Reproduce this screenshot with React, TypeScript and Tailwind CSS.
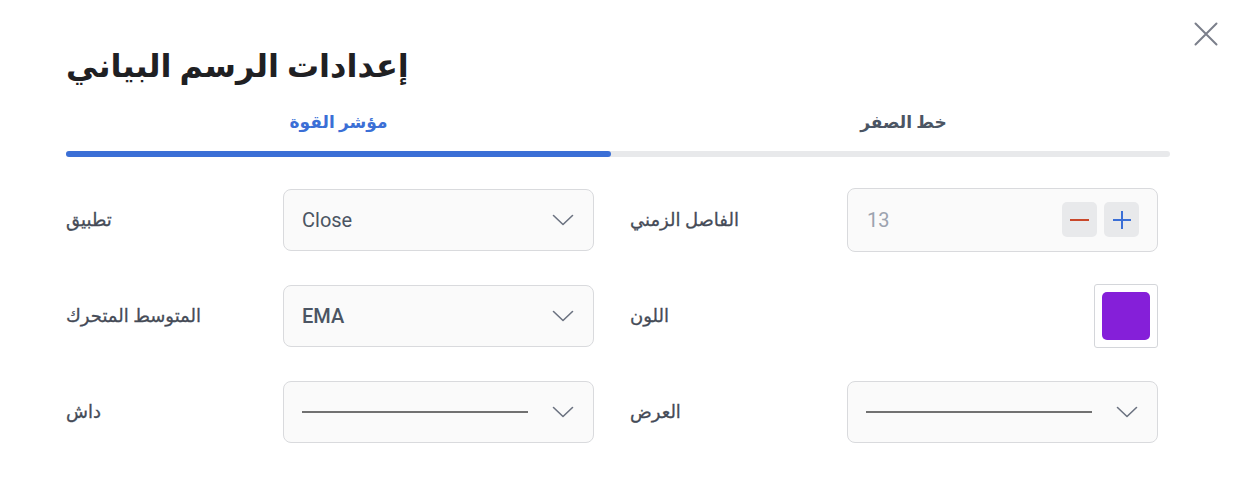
import React from "react";

const Chevron = () => (
  <svg width="22" height="14" viewBox="0 0 22 14" fill="none" className="shrink-0">
    <path d="M1.5 2.5 L11 11.5 L20.5 2.5" stroke="#6b7280" strokeWidth="1.6" strokeLinecap="round" strokeLinejoin="round" />
  </svg>
);

const Label = ({ children }: { children: React.ReactNode }) => (
  <div className="w-[217px] shrink-0 text-[18px] font-normal text-[#454b57] [-webkit-text-stroke:0.3px_#454b57]">{children}</div>
);

const Select = ({ children }: { children: React.ReactNode }) => (
  <div className="flex h-[62px] flex-1 items-center justify-between rounded-[8px] border border-[#d9dadd] bg-[#fafafa] pl-[18px] pr-[19px]">
    {children}
    <Chevron />
  </div>
);

const LineSample = () => <div className="h-[2px] w-[226px] bg-[#717171]" />;

export default function App() {
  return (
    <div className="relative h-[494px] w-[1238px] bg-white font-['Roboto','DejaVu_Sans',sans-serif]">
      <button type="button" aria-label="Close" className="absolute right-[20px] top-[22px]">
        <svg width="24" height="24" viewBox="0 0 24 24" fill="none">
          <path d="M1.5 1.5 L22.5 22.5 M22.5 1.5 L1.5 22.5" stroke="#7b7f8b" strokeWidth="2" strokeLinecap="round" />
        </svg>
      </button>

      <div className="pl-[66px] pr-[68px] pt-[44px]">
        <h1 className="text-[32px] font-bold leading-[44px] text-[#1f2023]">إعدادات الرسم البياني</h1>

        <div className="mt-[22px]">
          <div className="flex">
            <div className="w-[545px] text-center text-[17px] font-semibold text-[#3b6fd6]">مؤشر القوة</div>
            <div className="flex-1 pl-[26px] text-center text-[17px] font-semibold text-[#4b5563]">خط الصفر</div>
          </div>
          <div className="mt-[15px] h-[6px] rounded-full bg-[#e8e9eb]">
            <div className="h-[6px] w-[545px] rounded-full bg-[#3b6fd6]" />
          </div>
        </div>

        <div className="mt-[31px] grid w-[1092px] grid-cols-2 gap-x-[36px] gap-y-[32px]">
          <div className="flex h-[64px] items-center">
            <Label>تطبيق</Label>
            <Select>
              <span className="text-[20px] text-[#4b5563]">Close</span>
            </Select>
          </div>
          <div className="flex h-[64px] items-center">
            <Label>الفاصل الزمني</Label>
            <div className="flex h-[64px] flex-1 items-center justify-between rounded-[8px] border border-[#d9dadd] bg-[#fafafa] pl-[19px] pr-[18px]">
              <span className="text-[20px] text-[#9ca3af]">13</span>
              <div className="flex gap-[7px]">
                <button type="button" className="flex h-[35px] w-[35px] items-center justify-center rounded-[5px] bg-[#e8e9eb]">
                  <div className="h-[2px] w-[19px] bg-[#c9472a]" />
                </button>
                <button type="button" className="flex h-[35px] w-[35px] items-center justify-center rounded-[5px] bg-[#e8e9eb]">
                  <svg width="20" height="20" viewBox="0 0 20 20">
                    <path d="M10 1 V19 M1 10 H19" stroke="#3b6fd6" strokeWidth="2" />
                  </svg>
                </button>
              </div>
            </div>
          </div>

          <div className="flex h-[64px] items-center">
            <Label>المتوسط المتحرك</Label>
            <Select>
              <span className="text-[20px] font-medium text-[#4b5563]">EMA</span>
            </Select>
          </div>
          <div className="flex h-[64px] items-center">
            <Label>اللون</Label>
            <div className="ml-auto h-[64px] w-[64px] rounded-[3px] border border-[#d4d6da] p-[7px]">
              <div className="h-full w-full rounded-[5px] bg-[#851fd9]" />
            </div>
          </div>

          <div className="flex h-[64px] items-center">
            <Label>داش</Label>
            <Select>
              <LineSample />
            </Select>
          </div>
          <div className="flex h-[64px] items-center">
            <Label>العرض</Label>
            <Select>
              <LineSample />
            </Select>
          </div>
        </div>
      </div>
    </div>
  );
}
